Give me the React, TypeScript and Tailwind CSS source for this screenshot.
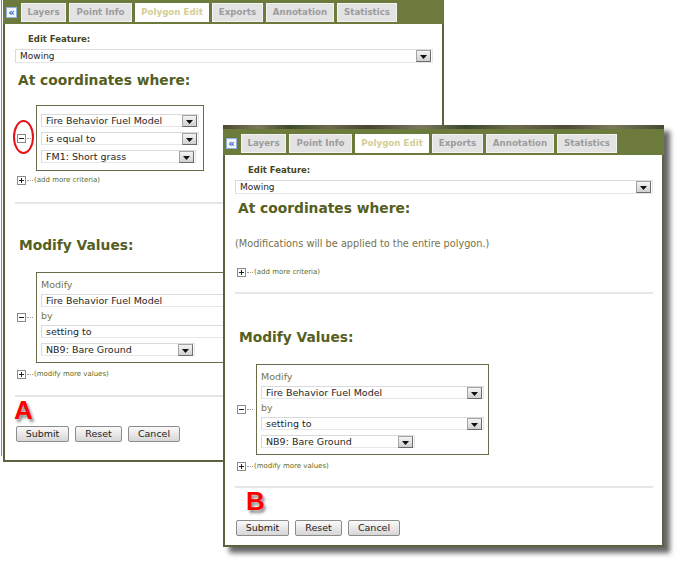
import React from 'react';

const tabs = [
  { label: 'Layers', w: 'w-[45px]' },
  { label: 'Point Info', w: 'w-[63px]' },
  { label: 'Polygon Edit', w: 'w-[74px]', active: true },
  { label: 'Exports', w: 'w-[51px]' },
  { label: 'Annotation', w: 'w-[68px]' },
  { label: 'Statistics', w: 'w-[60px]' },
];

function DropButton() {
  return (
    <span className="flex h-[12px] w-[15px] shrink-0 items-end justify-center border border-[#a4a4a4] border-b-[#6c6c6c] border-r-[#6c6c6c] bg-[linear-gradient(#f4f4f4,#d0d0d0)] pb-[2px]">
      <svg width="7" height="4" viewBox="0 0 7 4">
        <path d="M0 0h7L3.5 4z" fill="#111" />
      </svg>
    </span>
  );
}

function Select({ value, className = '', small = false }: { value: string; className?: string; small?: boolean }) {
  return (
    <div
      className={`flex items-center justify-between border border-[#e6e6e6] border-l-[#dadada] border-t-[#dadada] bg-white pl-[4px] pr-px text-[#262626] ${
        small ? 'text-[9px]' : 'text-[9.5px]'
      } ${className}`}
    >
      <span className="leading-none">{value}</span>
      <DropButton />
    </div>
  );
}

function Toggle({ plus = false }: { plus?: boolean }) {
  return (
    <span className="flex items-center">
      <svg width="9" height="9" viewBox="0 0 9 9">
        <rect x="0.5" y="0.5" width="8" height="8" fill="#fff" stroke="#8a8a8a" />
        <path d="M2 4.5h5" stroke="#222" />
        {plus && <path d="M4.5 2v5" stroke="#222" />}
      </svg>
      <span className="ml-px w-[6px] border-t border-dotted border-[#9a9a9a]" />
    </span>
  );
}

function AddLink({ text, className = '' }: { text: string; className?: string }) {
  return (
    <div className={`ml-[2px] flex h-[10px] items-center gap-[1px] ${className}`}>
      <Toggle plus />
      <span className="text-[7px] leading-none text-[#5e6a24]">{text}</span>
    </div>
  );
}

function Buttons() {
  const btn =
    'flex h-[16px] items-center justify-center rounded-[2px] border border-[#8c8c8c] bg-[linear-gradient(#fafafa,#d6d6d6)] text-[9.5px] leading-none text-[#222]';
  return (
    <div className="ml-[1px] flex gap-[6px]">
      <div className={`${btn} w-[53px]`}>Submit</div>
      <div className={`${btn} w-[47px]`}>Reset</div>
      <div className={`${btn} w-[52px]`}>Cancel</div>
    </div>
  );
}

function Marker({ letter, className }: { letter: string; className: string }) {
  return (
    <div className={className}>
      <div className="font-['Liberation_Sans',sans-serif] text-[26px] font-bold leading-none text-[#ff0000] [text-shadow:2px_3px_3px_rgba(0,0,0,0.45)]">
        {letter}
      </div>
    </div>
  );
}

function ModifyBox() {
  return (
    <div className="flex items-center">
      <div className="ml-[2px] mr-[3px]">
        <Toggle />
      </div>
      <div className="w-[233px] border border-[#6b6b4a] px-[4px] pb-[6px] pt-[6px]">
        <div className="text-[9.5px] leading-[12px] text-[#7a7448]">Modify</div>
        <Select value="Fire Behavior Fuel Model" className="mt-[3px] h-[13px] w-[223px]" />
        <div className="mt-[3px] text-[9.5px] leading-[12px] text-[#7a7448]">by</div>
        <Select value="setting to" className="mt-[3px] h-[13px] w-[223px]" />
        <Select value="NB9: Bare Ground" className="mt-[5px] h-[13px] w-[154px]" />
      </div>
    </div>
  );
}

function Panel({ className, children }: { className: string; children: React.ReactNode }) {
  return (
    <div className={`absolute w-[441px] ${className}`}>
      <div className="h-[4px] bg-[linear-gradient(90deg,#4b4a33,#7d7a5c_8%,#3e4a2c_15%,#6f6a4e_24%,#454532_33%,#7b7960_45%,#3c472d_55%,#6c6a4c_66%,#4b4b36_78%,#7a7a5c_88%,#454a30)]" />
      <div className="flex h-[26px] items-start bg-[#6c7a3c] pl-[3px] pt-[5px]">
        <div className="mt-[4px] flex h-[11px] w-[11px] items-center justify-center border border-[#8fb0e0] bg-[#f4f8ff] text-[10px] font-bold leading-none text-[#2f5fc0]">
          «
        </div>
        <div className="ml-[4px] flex gap-[3px]">
          {tabs.map((t) => (
            <div
              key={t.label}
              className={`flex h-[19px] items-center justify-center border text-[8.7px] font-bold leading-none ${t.w} ${
                t.active
                  ? 'border-white bg-white text-[#d4cd96]'
                  : 'border-[#f3f3f3] bg-[#e3e3e3] text-[#9c9c9c]'
              }`}
            >
              {t.label}
            </div>
          ))}
        </div>
      </div>
      <div className="border-x-2 border-b-2 border-[#5d6140] bg-white pl-[10px] pr-[9px]">{children}</div>
    </div>
  );
}

function Header({ gap }: { gap: string }) {
  return (
    <>
      <div className="ml-[13px] pt-[10px] text-[8.5px] font-bold leading-[11px] text-[#454520]">Edit Feature:</div>
      <Select value="Mowing" small className="mt-[4px] h-[14px] w-full" />
      <div className={`ml-[3px] text-[13.8px] font-bold leading-[18px] text-[#55601f] ${gap}`}>At coordinates where:</div>
    </>
  );
}

export default function App() {
  return (
    <div className="relative h-[580px] w-[686px] overflow-hidden bg-white font-['DejaVu_Sans',sans-serif]">
      <div className="absolute left-[1px] top-0 h-[456px] w-px bg-[#8a8a7a]" />

      <Panel className="left-[3px] top-[-6px]">
        <Header gap="mt-[8px]" />
        <div className="mt-[16px] flex items-center">
          <div className="relative ml-[2px] mr-[3px]">
            <Toggle />
            <div className="absolute left-[-4px] top-[-14px] h-[34px] w-[21px] rounded-[50%] border-2 border-[#e8101a]" />
          </div>
          <div className="w-[168px] border border-[#6b6b4a] px-[4px] pb-[7px] pt-[8px]">
            <Select value="Fire Behavior Fuel Model" className="h-[13px] w-[158px]" />
            <Select value="is equal to" className="mt-[5px] h-[13px] w-[158px]" />
            <Select value="FM1: Short grass" className="mt-[5px] h-[13px] w-[155px]" />
          </div>
        </div>
        <AddLink text="(add more criteria)" className="mt-[4px]" />
        <div className="mt-[17px] h-[2px] bg-[#e6e6e6]" />
        <div className="ml-[4px] mt-[32px] text-[13.8px] font-bold leading-[18px] text-[#55601f]">Modify Values:</div>
        <div className="mt-[18px]">
          <ModifyBox />
        </div>
        <AddLink text="(modify more values)" className="mt-[6px]" />
        <div className="mt-[16px] h-[2px] bg-[#e6e6e6]" />
        <Marker letter="A" className="ml-[-1px] h-[29px]" />
        <Buttons />
        <div className="h-[18px]" />
      </Panel>

      <Panel className="left-[223px] top-[125px] shadow-[6px_6px_5px_rgba(0,0,0,0.6)]">
        <Header gap="mt-[5px]" />
        <div className="mt-[21px] text-[9.75px] leading-[12px] text-[#77724a]">
          (Modifications will be applied to the entire polygon.)
        </div>
        <AddLink text="(add more criteria)" className="mt-[17px]" />
        <div className="mt-[15px] h-[2px] bg-[#e6e6e6]" />
        <div className="ml-[4px] mt-[34px] text-[13.8px] font-bold leading-[18px] text-[#55601f]">Modify Values:</div>
        <div className="mt-[18px]">
          <ModifyBox />
        </div>
        <AddLink text="(modify more values)" className="mt-[6px]" />
        <div className="mt-[15px] h-[2px] bg-[#e6e6e6]" />
        <Marker letter="B" className="ml-[11px] h-[32px] pt-[0px]" />
        <Buttons />
        <div className="h-[9px]" />
      </Panel>
    </div>
  );
}
